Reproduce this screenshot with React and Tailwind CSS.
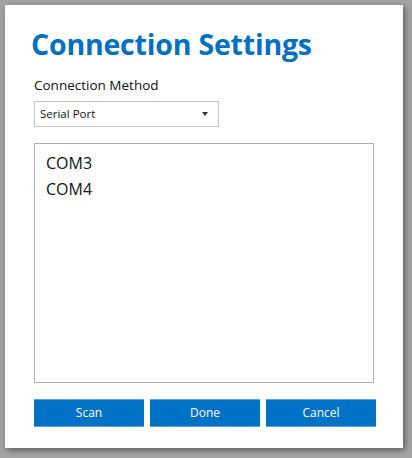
export default function App() {
  const ports = ['COM3', 'COM4']

  return (
    <div className="w-[412px] h-[458px] bg-[#a3a3a3] p-[5px] pb-[10px] pr-[9px]" style={{ fontFamily: '"Open Sans", "Noto Sans", sans-serif' }}>
      <div className="w-[398px] h-[443px] bg-white shadow-[2px_2px_6px_rgba(0,0,0,0.45)] flex flex-col pl-[29px] pr-[27px]">
        <h1 className="mt-[19px] h-[40px] text-[28.5px] leading-[40px] font-bold text-[#0070c4] tracking-[-0.2px] -ml-[3px]">
          Connection Settings
        </h1>
        <div className="mt-[12px] text-[13.5px] leading-[18px] text-[#111]">Connection Method</div>
        <div className="mt-[7px] w-[185px] h-[26px] border border-[#c4c4c4] flex items-center justify-between pl-[5px] pr-[10px]">
          <span className="text-[11.5px] text-[#111]">Serial Port</span>
          <span className="w-0 h-0 border-l-[3.5px] border-r-[3.5px] border-t-[4px] border-l-transparent border-r-transparent border-t-[#333]" />
        </div>
        <div className="mt-[16px] w-[340px] h-[240px] border border-[#adadad] pt-[6px] pl-[11px]">
          {ports.map((p) => (
            <div key={p} className="text-[16px] leading-[26px] text-[#111]">{p}</div>
          ))}
        </div>
        <div className="mt-[16px] flex gap-[6px]">
          {['Scan', 'Done', 'Cancel'].map((b) => (
            <button
              key={b}
              className="w-[110px] h-[28px] bg-[#0072c6] border-y border-[#5aa2dc] text-white text-[12px]"
            >
              {b}
            </button>
          ))}
        </div>
      </div>
    </div>
  )
}
